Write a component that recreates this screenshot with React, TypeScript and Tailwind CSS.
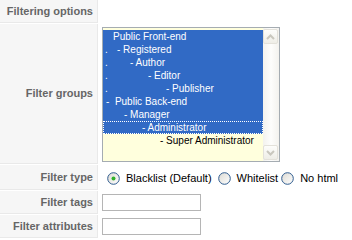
import React from "react";

type Group = {
  lead: string;
  dot: boolean;
  text: string;
  selected: boolean;
  focused?: boolean;
};

const groups: Group[] = [
  { lead: "w-[10px]", dot: false, text: "Public Front-end", selected: true },
  { lead: "w-[14px]", dot: true, text: "- Registered", selected: true },
  { lead: "w-[27px]", dot: true, text: "- Author", selected: true },
  { lead: "w-[45px]", dot: true, text: "- Editor", selected: true },
  { lead: "w-[63px]", dot: true, text: "- Publisher", selected: true },
  { lead: "w-[3px]", dot: false, text: "-  Public Back-end", selected: true },
  { lead: "w-[21px]", dot: false, text: "- Manager", selected: true },
  { lead: "w-[39px]", dot: false, text: "- Administrator", selected: true, focused: true },
  { lead: "w-[57px]", dot: false, text: "- Super Administrator", selected: false },
];

const KeyCell = ({ children }: { children?: React.ReactNode }) => (
  <div className="flex w-[98px] shrink-0 items-center justify-end border-r border-b border-[#e9e9e9] bg-[#f6f6f6] pr-[4px] text-[11px] font-bold text-[#666666]">
    {children}
  </div>
);

const ScrollButton = ({ up }: { up: boolean }) => (
  <div className="flex h-[15px] w-[15px] items-center justify-center rounded-[2px] border border-[#e3e1da] bg-gradient-to-b from-[#fdfdfb] to-[#eeede7]">
    <svg width="9" height="6" viewBox="0 0 9 6">
      <path
        d={up ? "M1 5 L4.5 1.5 L8 5" : "M1 1 L4.5 4.5 L8 1"}
        fill="none"
        stroke="#c9c7be"
        strokeWidth="2"
      />
    </svg>
  </div>
);

const Radio = ({ id, checked, label, space }: { id: string; checked?: boolean; label: string; space: string }) => (
  <label className="flex items-center">
    <span className={`${space} mr-[6px] flex h-[13px] w-[13px] items-center justify-center`}>
      <svg width="13" height="13" viewBox="0 0 13 13">
        <defs>
          <linearGradient id={id} x1="0" y1="0" x2="1" y2="1">
            <stop offset="0" stopColor="#dcdad3" />
            <stop offset="1" stopColor="#ffffff" />
          </linearGradient>
        </defs>
        <circle cx="6.5" cy="6.5" r="5.8" fill={`url(#${id})`} stroke="#2f5c8f" strokeWidth="1" />
        {checked && <circle cx="6.5" cy="6.5" r="2" fill="#32b12c" />}
      </svg>
    </span>
    <span>{label}</span>
  </label>
);

export default function App() {
  return (
    <div className="flex w-[352px] flex-col gap-px bg-white font-['Liberation_Sans',Arial,sans-serif]">
      <div className="flex h-[23px] gap-px">
        <KeyCell>Filtering options</KeyCell>
        <div className="flex-1" />
      </div>

      <div className="flex h-[140px] gap-px">
        <KeyCell>Filter groups</KeyCell>
        <div className="flex-1 pl-[3px] pt-[3px]">
          <div className="flex h-[135px] w-[178px] border border-[#a5acb2] bg-[#ffffdd]">
            <div className="flex-1 pt-[2px] text-[10px] leading-[13px]">
              {groups.map((g, i) => (
                <div
                  key={i}
                  className={`flex h-[13px] whitespace-pre ${
                    g.selected ? "bg-[#316ac5] text-white" : "text-black"
                  } ${g.focused ? "outline-1 -outline-offset-1 outline-dotted outline-white" : ""}`}
                >
                  <span className={`${g.lead} shrink-0 pl-[2px]`}>{g.dot ? "." : ""}</span>
                  <span>{g.text}</span>
                </div>
              ))}
            </div>
            <div className="flex w-[16px] flex-col justify-between bg-gradient-to-r from-[#f3f2ee] via-[#fdfdfc] to-[#f3f2ee] py-px">
              <ScrollButton up />
              <ScrollButton up={false} />
            </div>
          </div>
        </div>
      </div>

      <div className="flex h-[25px] gap-px">
        <KeyCell>Filter type</KeyCell>
        <div className="flex flex-1 items-center pt-px text-[11px] text-black">
          <Radio id="r-black" checked label="Blacklist (Default)" space="ml-[8px]" />
          <Radio id="r-white" label="Whitelist" space="ml-[6px]" />
          <Radio id="r-none" label="No html" space="ml-[3px]" />
        </div>
      </div>

      <div className="flex h-[23px] gap-px">
        <KeyCell>Filter tags</KeyCell>
        <div className="flex-1 pl-[3px] pt-[3px]">
          <input className="block h-[17px] w-[99px] border border-[#b5b5b5] bg-white" />
        </div>
      </div>

      <div className="flex h-[23px] gap-px">
        <KeyCell>Filter attributes</KeyCell>
        <div className="flex-1 pl-[3px] pt-[3px]">
          <input className="block h-[17px] w-[99px] border border-[#b5b5b5] bg-white" />
        </div>
      </div>
    </div>
  );
}
